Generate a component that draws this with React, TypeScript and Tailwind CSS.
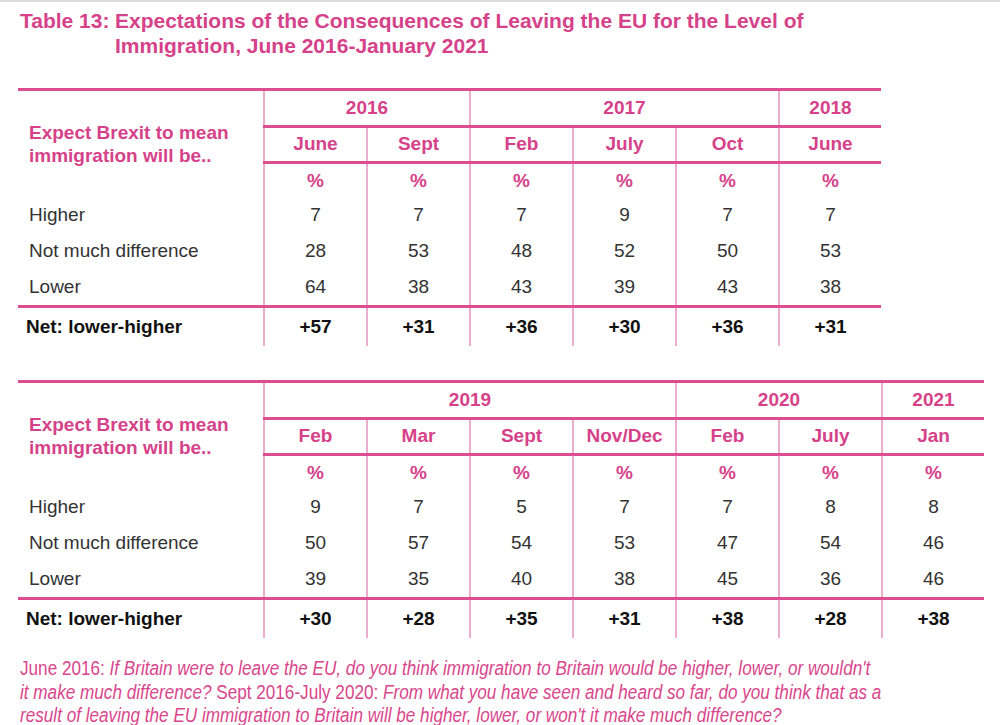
import React from "react";

const pinkText = "text-[#d6428a]";

type Year = { label: string; span: number };
type Row = { label: string; values: string[] };

const spanWidth: Record<number, string> = {
  1: "w-[103px]",
  2: "w-[206px]",
  3: "w-[309px]",
  4: "w-[412px]",
};

const table1 = {
  years: [
    { label: "2016", span: 2 },
    { label: "2017", span: 3 },
    { label: "2018", span: 1 },
  ],
  months: ["June", "Sept", "Feb", "July", "Oct", "June"],
  rows: [
    { label: "Higher", values: ["7", "7", "7", "9", "7", "7"] },
    { label: "Not much difference", values: ["28", "53", "48", "52", "50", "53"] },
    { label: "Lower", values: ["64", "38", "43", "39", "43", "38"] },
  ],
  net: ["+57", "+31", "+36", "+30", "+36", "+31"],
};

const table2 = {
  years: [
    { label: "2019", span: 4 },
    { label: "2020", span: 2 },
    { label: "2021", span: 1 },
  ],
  months: ["Feb", "Mar", "Sept", "Nov/Dec", "Feb", "July", "Jan"],
  rows: [
    { label: "Higher", values: ["9", "7", "5", "7", "7", "8", "8"] },
    { label: "Not much difference", values: ["50", "57", "54", "53", "47", "54", "46"] },
    { label: "Lower", values: ["39", "35", "40", "38", "45", "36", "46"] },
  ],
  net: ["+30", "+28", "+35", "+31", "+38", "+28", "+38"],
};

const rowHeights = ["h-[35px]", "h-[36px]", "h-[36px]"];

function Cell({ children, className = "" }: { children?: React.ReactNode; className?: string }) {
  return (
    <div className={`w-[103px] shrink-0 flex items-center justify-center border-l-2 border-[#ebaecd] ${className}`}>
      {children}
    </div>
  );
}

function DataTable({ years, months, rows, net }: { years: Year[]; months: string[]; rows: Row[]; net: string[] }) {
  return (
    <div className="ml-[18px] w-fit">
      <div className="h-[3px] bg-[#db4d8f]" />

      {/* header */}
      <div className="flex">
        <div className={`w-[245px] shrink-0 pl-[11px] pt-[30px] text-[19px] font-bold leading-[23px] ${pinkText}`}>
          Expect Brexit to mean
          <br />
          immigration will be..
        </div>
        <div>
          <div className="flex">
            {years.map((y) => (
              <div
                key={y.label}
                className={`${spanWidth[y.span]} h-[34px] flex items-center justify-center border-l-2 border-[#ebaecd] text-[19px] font-bold ${pinkText}`}
              >
                {y.label}
              </div>
            ))}
          </div>
          <div className="h-[3px] bg-[#db4d8f]" />
          <div className="flex">
            {months.map((m, i) => (
              <Cell key={i} className={`h-[33px] text-[19px] font-bold ${pinkText}`}>
                {m}
              </Cell>
            ))}
          </div>
          <div className="h-[3px] bg-[#db4d8f]" />
          <div className="flex">
            {months.map((_, i) => (
              <Cell key={i} className={`h-[34px] text-[19px] font-bold ${pinkText}`}>
                %
              </Cell>
            ))}
          </div>
        </div>
      </div>

      {/* body */}
      {rows.map((r, ri) => (
        <div key={r.label} className={`flex ${rowHeights[ri]} text-[19px] text-[#333333]`}>
          <div className="w-[245px] shrink-0 pl-[11px] flex items-center">{r.label}</div>
          {r.values.map((v, i) => (
            <Cell key={i}>{v}</Cell>
          ))}
        </div>
      ))}

      <div className="h-[3px] bg-[#db4d8f]" />

      <div className="flex h-[38px] text-[19px] font-bold text-[#111111]">
        <div className="w-[245px] shrink-0 pl-[8px] flex items-center">Net: lower-higher</div>
        {net.map((v, i) => (
          <Cell key={i}>{v}</Cell>
        ))}
      </div>
    </div>
  );
}

export default function App() {
  return (
    <div className="w-[1000px] h-[725px] bg-white overflow-hidden" style={{ fontFamily: "'Liberation Sans', Arial, sans-serif" }}>
      <div className="h-[2px] bg-[#dcdcdc]" />

      {/* title */}
      <div className={`mt-[6px] ml-[20px] flex text-[21px] font-bold leading-[25px] ${pinkText}`}>
        <div className="w-[95px] shrink-0">Table 13:</div>
        <div>
          Expectations of the Consequences of Leaving the EU for the Level of
          <br />
          Immigration, June 2016-January 2021
        </div>
      </div>

      <div className="mt-[30px]">
        <DataTable {...table1} />
      </div>

      <div className="mt-[34px]">
        <DataTable {...table2} />
      </div>

      {/* footnote */}
      <div className="mt-[19px] ml-[20px] text-[20px] leading-[23.5px] text-[#d9468c] whitespace-nowrap">
        <div className="origin-left scale-x-[0.857] w-fit">
          June 2016: <i>If Britain were to leave the EU, do you think immigration to Britain would be higher, lower, or wouldn't</i>
        </div>
        <div className="origin-left scale-x-[0.857] w-fit">
          <i>it make much difference?</i> Sept 2016-July 2020: <i>From what you have seen and heard so far, do you think that as a</i>
        </div>
        <div className="origin-left scale-x-[0.857] w-fit">
          <i>result of leaving the EU immigration to Britain will be higher, lower, or won't it make much difference?</i>
        </div>
      </div>
    </div>
  );
}
